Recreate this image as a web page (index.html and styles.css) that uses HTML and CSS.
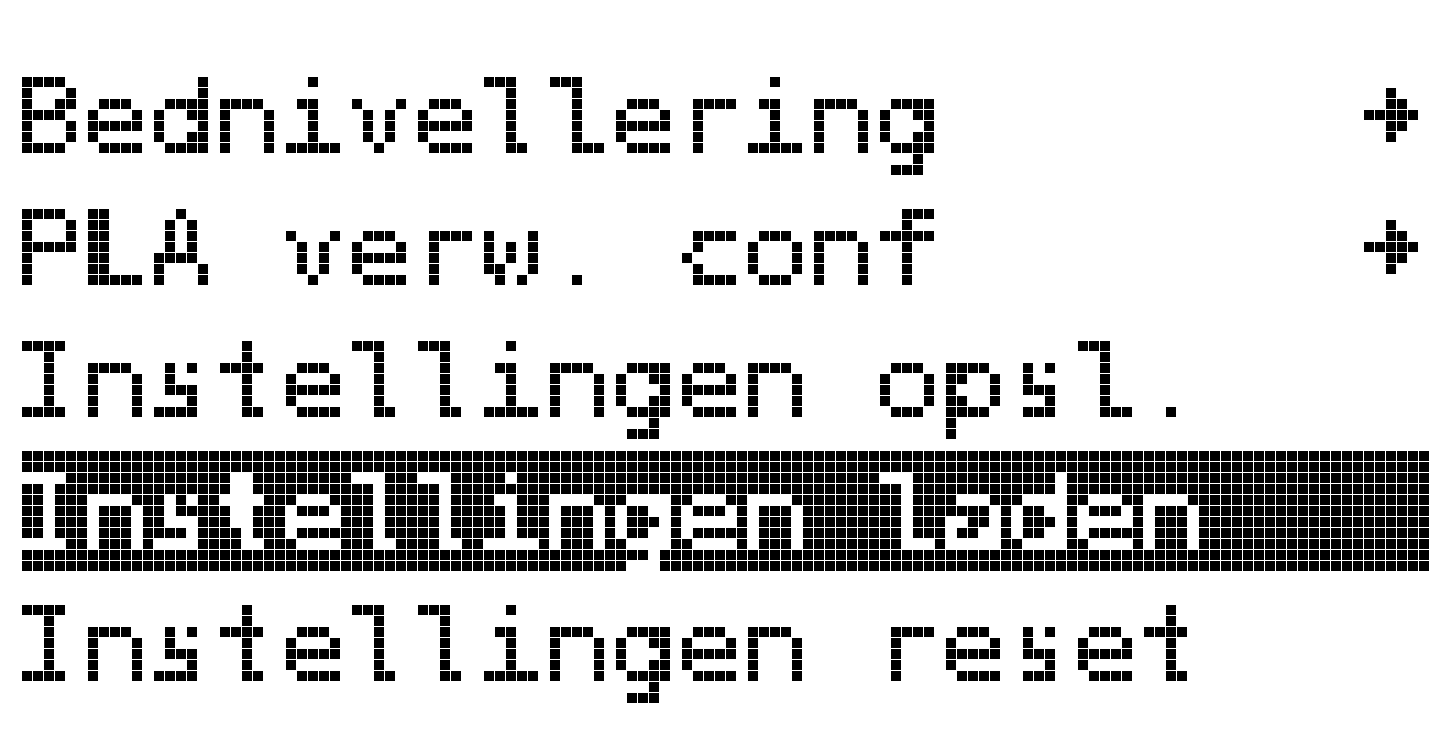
FILE: index.html
```html
<!DOCTYPE html>
<html lang="nl">
<head>
<meta charset="utf-8">
<title>Menu</title>
<link rel="stylesheet" href="styles.css">
</head>
<body>
<svg class="defs" width="0" height="0" aria-hidden="true">
  <filter id="lcdpx" filterUnits="userSpaceOnUse" primitiveUnits="userSpaceOnUse" x="0" y="0" width="1452" height="748" color-interpolation-filters="sRGB">
    <feComponentTransfer in="SourceGraphic" result="sharp">
      <feFuncR type="discrete" tableValues="0 1"/>
      <feFuncG type="discrete" tableValues="0 1"/>
      <feFuncB type="discrete" tableValues="0 1"/>
      <feFuncA type="discrete" tableValues="0 1"/>
    </feComponentTransfer>
    <feFlood x="5" y="5" width="1" height="1" flood-color="#000" flood-opacity="1"/>
    <feComposite x="0" y="0" width="11" height="11" operator="over"/>
    <feTile x="0" y="0" width="1452" height="748" result="dots"/>
    <feComposite in="sharp" in2="dots" operator="in"/>
    <feMorphology operator="dilate" radius="5"/>
  </filter>
</svg>
<div class="lcd">
  <div class="menu">
    <div class="item">
      <span class="label">Bednivellering</span>
      <svg class="arrow" width="54" height="54" viewBox="0 0 54 54" aria-hidden="true">
        <rect x="22" y="0" width="11" height="11"/>
        <rect x="22" y="11" width="22" height="11"/>
        <rect x="0" y="22" width="55" height="11"/>
        <rect x="22" y="33" width="22" height="11"/>
        <rect x="22" y="44" width="11" height="11"/>
      </svg>
    </div>
    <div class="item">
      <span class="label">PLA verw. conf</span>
      <svg class="arrow" width="54" height="54" viewBox="0 0 54 54" aria-hidden="true">
        <rect x="22" y="0" width="11" height="11"/>
        <rect x="22" y="11" width="22" height="11"/>
        <rect x="0" y="22" width="55" height="11"/>
        <rect x="22" y="33" width="22" height="11"/>
        <rect x="22" y="44" width="11" height="11"/>
      </svg>
    </div>
    <div class="item">
      <span class="label">Instellingen opsl.</span>
    </div>
    <div class="item selected">
      <span class="label">Instellingen laden</span>
    </div>
    <div class="item">
      <span class="label">Instellingen reset</span>
    </div>
  </div>
  <div class="grid" aria-hidden="true"></div>
</div>
</body>
</html>
```
FILE: styles.css
```css
html, body {
  margin: 0;
  padding: 0;
  background: #fff;
}
.defs {
  position: absolute;
  width: 0;
  height: 0;
  overflow: hidden;
}
.lcd {
  position: relative;
  width: 1452px;
  height: 748px;
  overflow: hidden;
}
.menu {
  width: 1452px;
  height: 748px;
  box-sizing: border-box;
  padding: 55px 22px 0 22px;
  display: flex;
  flex-direction: column;
  gap: 11px;
  filter: url(#lcdpx);
}
.item {
  height: 121px;
  display: flex;
  justify-content: space-between;
  align-items: flex-start;
  color: #000;
}
.item.selected {
  background: #000;
  color: #fff;
}
.label {
  font-family: "DejaVu Sans Mono", monospace;
  font-size: 106px;
  letter-spacing: 2.2px;
  line-height: 115px;
  margin-left: -5px;
  padding-top: 6px;
  white-space: pre;
  -webkit-text-stroke: 1.5px currentColor;
}
.arrow {
  margin-top: 33px;
  margin-right: 12px;
  fill: #000;
}
.grid {
  position: absolute;
  inset: 0;
  pointer-events: none;
  background-image:
    repeating-linear-gradient(to right, transparent 0 10px, #fff 10px 11px),
    repeating-linear-gradient(to bottom, transparent 0 10px, #fff 10px 11px);
  background-position: 22px 0, 0 0;
}
```
